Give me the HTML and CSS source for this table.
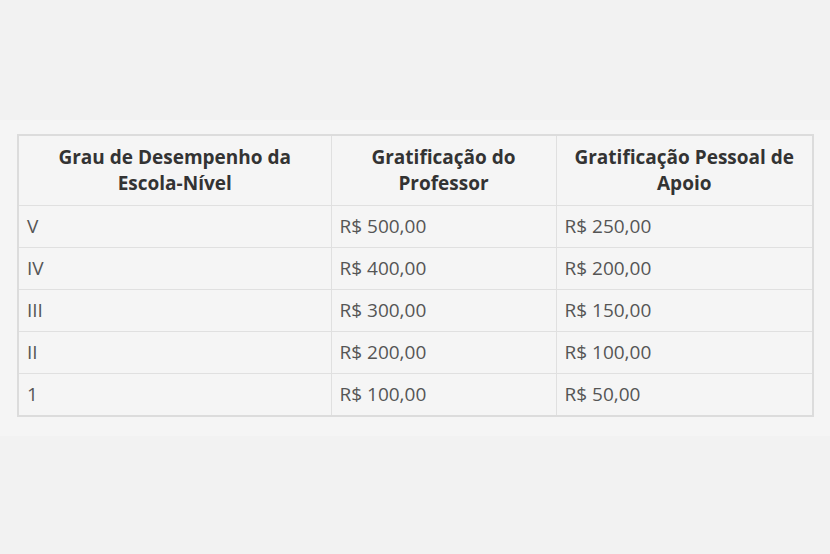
FILE: index.html
```html
<!DOCTYPE html>
<html lang="pt-BR">
  <head>
    <meta charset="utf-8" />
    <title>Gratificação</title>
    <link rel="stylesheet" href="styles.css">
  </head>
  <body>
    <div class="band">
      <table class="grat">
        <colgroup>
          <col class="c1">
          <col class="c2">
          <col class="c3">
        </colgroup>
        <thead>
          <tr>
            <th>Grau de Desempenho da Escola-Nível</th>
            <th>Gratificação do Professor</th>
            <th>Gratificação Pessoal de Apoio</th>
          </tr>
        </thead>
        <tbody>
          <tr><td>V</td><td>R$ 500,00</td><td>R$ 250,00</td></tr>
          <tr><td>IV</td><td>R$ 400,00</td><td>R$ 200,00</td></tr>
          <tr><td>III</td><td>R$ 300,00</td><td>R$ 150,00</td></tr>
          <tr><td>II</td><td>R$ 200,00</td><td>R$ 100,00</td></tr>
          <tr><td>1</td><td>R$ 100,00</td><td>R$ 50,00</td></tr>
        </tbody>
      </table>
    </div>
  </body>
</html>
```

FILE: styles.css
```css
body {
  margin: 0;
  background-color: #f2f2f2;
  font-family: "Open Sans", "Liberation Sans", sans-serif;
}

.band {
  margin-top: 120px;
  padding: 14px 0 19px 17px;
  background-color: #f5f5f5;
}

.grat {
  width: 795px;
  table-layout: fixed;
  border-collapse: collapse;
  border: 2px solid #dcdcdc;
  font-size: 19px;
  line-height: 26px;
}

.c1 { width: 313px; }
.c2 { width: 225px; }
.c3 { width: 257px; }

.grat th,
.grat td {
  border: 1px solid #e0e0e0;
  padding: 7px 8px 8px 8px;
}

.grat th {
  color: #333333;
  font-weight: 700;
  text-align: center;
  padding: 8px 16px 9px 16px;
}

.grat td {
  color: #555555;
  text-align: left;
}
```
